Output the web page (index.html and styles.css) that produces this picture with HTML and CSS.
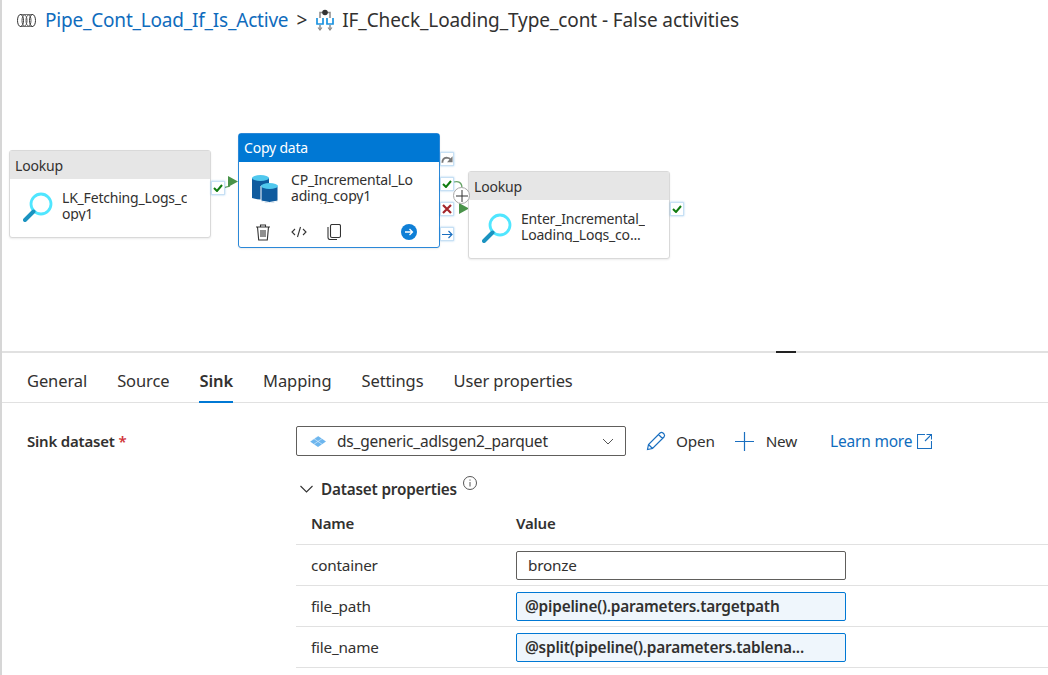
FILE: index.html
```html
<!DOCTYPE html>
<html lang="en">
<head>
  <meta charset="UTF-8">
  <title>IF_Check_Loading_Type_cont - False activities</title>
  <link rel="stylesheet" href="styles.css">
</head>
<body>
<div class="page">
  <div class="crumbs">
    <svg class="pipe-icon" width="19" height="13" viewBox="0 0 19 13" fill="none" stroke="#333" stroke-width="1">
      <path d="M3 .5h13M3 12.500h13" stroke="#777"/>
      <ellipse cx="3.500" cy="6.500" rx="3" ry="6"/>
      <ellipse cx="7.500" cy="6.500" rx="2.500" ry="5.500" stroke="#555"/>
      <ellipse cx="11.500" cy="6.500" rx="2.500" ry="5.500" stroke="#555"/>
      <ellipse cx="15.500" cy="6.500" rx="3" ry="6"/>
    </svg>
    <a class="crumb-link">Pipe_Cont_Load_If_Is_Active</a>
    <span class="crumb-sep">&gt;</span>
    <svg class="if-icon" width="18" height="22" viewBox="0 0 18 22" fill="none">
      <path d="M4 9V3.500h10V9M4 16v5M14 16v5" stroke="#8a8a8a" stroke-width="1.500"/>
      <circle cx="9" cy="3.500" r="2.800" fill="#333"/>
      <path d="M1 9v6h6V9M11 9v6h6V9" stroke="#1b93e0" stroke-width="1.700"/>
      <path d="M2 18.500l2 2.500 2-2.500M12 18.500l2 2.500 2-2.500" stroke="#8a8a8a" stroke-width="1.100"/>
    </svg>
    <span class="crumb-current">IF_Check_Loading_Type_cont - False activities</span>
  </div>

  <div class="canvas">
    <!-- links between activities -->
    <svg class="links" width="1048" height="311" viewBox="0 0 1048 311" fill="none">
      <path d="M224 148c3-2 4-1 6-2" stroke="#6aa56a" stroke-width="1.200"/>
      <path d="M228 136l10 5.500-10 5.500z" fill="#4a934a"/>
      <path d="M454 142c4-1 8 0 8 6" stroke="#6aa56a" stroke-width="1.200"/>
      <path d="M459 163l10 5.500-10 5.500z" fill="#4a934a"/>
    </svg>

    <div class="node node-a">
      <div class="node-head">Lookup</div>
      <div class="node-body">
        <svg class="lookup-icon" width="30" height="30" viewBox="0 0 30 30" fill="none">
          <circle cx="18" cy="12" r="10" stroke="#50e6ff" stroke-width="2.800"/>
          <path d="M10.500 19.500L2 28" stroke="#1b93c0" stroke-width="4" stroke-linecap="round"/>
        </svg>
        <div class="node-name">LK_Fetching_Logs_c<br>opy1</div>
      </div>
    </div>
    <div class="port port-a"><svg width="10" height="8" viewBox="0 0 10 8"><path class="tick" d="M1 4l3 3 5-6"/></svg></div>

    <div class="node node-b">
      <div class="node-head">Copy data</div>
      <div class="node-body">
        <svg class="copy-icon" width="26" height="30" viewBox="0 0 26 30">
          <path d="M0 4h17v20q-8.500 3-17 0z" fill="#0f5b9e"/>
          <ellipse cx="8.500" cy="4" rx="8.500" ry="3" fill="#50c8ee"/>
          <path d="M9 12h17v15q-8.500 3-17 0z" fill="#0f5b9e" stroke="#fff" stroke-width="1"/>
          <ellipse cx="17.500" cy="12" rx="8.500" ry="3" fill="#50c8ee"/>
        </svg>
        <div class="node-name">CP_Incremental_Lo<br>ading_copy1</div>
      </div>
      <div class="node-tools">
        <svg width="16" height="17" viewBox="0 0 16 17" fill="none" stroke="#333" stroke-width="1.100">
          <path d="M1 3h14M5.500 3V1h5v2M2.500 3l1.200 13h8.600L13.500 3M6 6v7M8 6v7M10 6v7"/>
        </svg>
        <svg width="16" height="12" viewBox="0 0 16 12" fill="none" stroke="#333" stroke-width="1.100">
          <path d="M4 3L1 6l3 3M12 3l3 3-3 3M9.500 1l-3 10"/>
        </svg>
        <svg width="14" height="16" viewBox="0 0 14 16" fill="none" stroke="#333" stroke-width="1.100">
          <rect x="3.500" y="0.500" width="10" height="13" rx="1.500"/>
          <path d="M1 3v10.500q0 2 2 2h7"/>
        </svg>
        <svg class="go-icon" width="16" height="16" viewBox="0 0 16 16" fill="none">
          <circle cx="8" cy="8" r="8" fill="#0f7fd6"/>
          <path d="M4 8h7.500M8.500 5l3 3-3 3" stroke="#fff" stroke-width="1.300"/>
        </svg>
      </div>
    </div>
    <div class="port port-skip"><svg width="13" height="9" viewBox="0 0 13 9" fill="none"><path d="M1.500 8q0-5 4.500-5.500 3 0 5 2.500" stroke="#7a7a7a" stroke-width="2"/><path d="M12.500 1v6.500H6.500z" fill="#7a7a7a"/></svg></div>
    <div class="port port-ok"><svg width="10" height="8" viewBox="0 0 10 8"><path class="tick" d="M1 4l3 3 5-6"/></svg></div>
    <div class="port port-fail"><svg width="10" height="10" viewBox="0 0 10 10"><path d="M1 1l8 8M9 1l-8 8" stroke="#a4262c" stroke-width="2.200"/></svg></div>
    <div class="port port-done"><svg width="11" height="9" viewBox="0 0 11 9" fill="none" stroke="#1a6fc0" stroke-width="1.200"><path d="M0 4.500h10M6.500 1L10 4.500 6.500 8"/></svg></div>

    <div class="node node-c">
      <div class="node-head">Lookup</div>
      <div class="node-body">
        <svg class="lookup-icon" width="30" height="30" viewBox="0 0 30 30" fill="none">
          <circle cx="18" cy="12" r="10" stroke="#50e6ff" stroke-width="2.800"/>
          <path d="M10.500 19.500L2 28" stroke="#1b93c0" stroke-width="4" stroke-linecap="round"/>
        </svg>
        <div class="node-name">Enter_Incremental_<br>Loading_Logs_co...</div>
      </div>
    </div>
    <div class="port port-c"><svg width="10" height="8" viewBox="0 0 10 8"><path class="tick" d="M1 4l3 3 5-6"/></svg></div>

    <div class="add-link">
      <svg width="12" height="12" viewBox="0 0 12 12" fill="none" stroke="#333" stroke-width="1"><path d="M6 0v12M0 6h12"/></svg>
    </div>
  </div>

  <div class="panel">
    <div class="grip"></div>
    <div class="tabs">
      <span class="tab">General</span>
      <span class="tab">Source</span>
      <span class="tab active">Sink</span>
      <span class="tab">Mapping</span>
      <span class="tab">Settings</span>
      <span class="tab">User properties</span>
    </div>

    <div class="form">
      <div class="sink-row">
        <label class="sink-label">Sink dataset <span class="req">*</span></label>
        <div class="select">
          <svg class="ds-icon" width="16" height="11" viewBox="0 0 16 11"><path d="M8 0l8 5.500L8 11 0 5.500z" fill="#6db6ee"/><path d="M4 2.700l8 5.500M8 0L0 5.500M12 2.700L4 8.200" stroke="#fff" stroke-width="0.500"/></svg>
          <span class="select-text">ds_generic_adlsgen2_parquet</span>
          <svg class="chev" width="12" height="7" viewBox="0 0 12 7" fill="none" stroke="#555" stroke-width="1"><path d="M1 1l5 5 5-5"/></svg>
        </div>
        <div class="action act-open">
          <svg width="20" height="20" viewBox="0 0 20 20" fill="none" stroke="#1a6fc0" stroke-width="1.200"><path d="M1.500 18.500l1-5L14 2q1.500-1.200 3 0l1 1q1.200 1.500 0 3L6.500 17.500zM2.500 13.500l4 4M12.500 3.500l4 4"/></svg>
          <span>Open</span>
        </div>
        <div class="action act-new">
          <svg width="19" height="19" viewBox="0 0 19 19" fill="none" stroke="#1a6fc0" stroke-width="1.200"><path d="M9.500 0v19M0 9.500h19"/></svg>
          <span>New</span>
        </div>
        <a class="learn">Learn more
          <svg width="15" height="15" viewBox="0 0 15 15" fill="none" stroke="#1a6fc0" stroke-width="1.100"><path d="M8 .5H.5v14h14V7M9.500.5h5v5M14.500.5L8 7"/></svg>
        </a>
      </div>

      <div class="props-head">
        <svg width="13" height="8" viewBox="0 0 13 8" fill="none" stroke="#333" stroke-width="1.100"><path d="M.5 1l6 6 6-6"/></svg>
        <span class="props-title">Dataset properties</span>
        <svg class="info" width="14" height="14" viewBox="0 0 14 14" fill="none" stroke="#444" stroke-width="0.900"><circle cx="7" cy="7" r="6.500"/><path d="M7 6v4.500M7 3.500v1.200"/></svg>
      </div>

      <div class="props">
        <div class="row row-head"><span class="col-name">Name</span><span class="col-value">Value</span></div>
        <div class="row"><span class="col-name">container</span><div class="field">bronze</div></div>
        <div class="row"><span class="col-name">file_path</span><div class="field expr">@pipeline().parameters.targetpath</div></div>
        <div class="row"><span class="col-name">file_name</span><div class="field expr">@split(pipeline().parameters.tablena...</div></div>
      </div>
    </div>
  </div>
</div>
</body>
</html>
```

FILE: styles.css
```css
* { box-sizing: border-box; }
body {
  margin: 0;
  background: #fff;
  color: #323130;
  font-family: "Noto Sans", "Open Sans", sans-serif;
  font-size: 14px;
}
.page {
  width: 1048px;
  height: 675px;
  overflow: hidden;
  border-left: 2px solid #d6d6d6;
  display: flex;
  flex-direction: column;
}

/* breadcrumb */
.crumbs {
  height: 40px;
  flex: none;
  display: flex;
  align-items: center;
  padding-left: 15px;
  font-size: 19px;
}
.pipe-icon { margin-right: 9px; }
.crumb-link { color: #0f6cbd; letter-spacing: -0.200px; }
.crumb-sep { margin: 0 9px 0 8px; }
.if-icon { margin-right: 8px; }
.crumb-current { letter-spacing: -0.100px; }

/* pipeline canvas, nodes sit at free positions */
.canvas {
  height: 311px;
  flex: none;
  position: relative;
}
.links { position: absolute; left: -2px; top: 0; }
.node {
  position: absolute;
  width: 202px;
  height: 88px;
  background: #fff;
  border: 1px solid #d9d9d9;
  border-radius: 3px;
  box-shadow: 0 1px 2px rgba(0,0,0,0.08);
}
.node-a { left: 7px; top: 110px; }
.node-b { left: 236px; top: 93px; height: 115px; border-color: #2b88d8; }
.node-c { left: 466px; top: 131px; }
.node-head {
  height: 28px;
  line-height: 30px;
  padding-left: 5px;
  background: #e6e6e6;
  font-size: 14px;
  letter-spacing: -0.200px;
}
.node-b .node-head { background: #0078d4; color: #fff; line-height: 28px; }
.node-body {
  display: flex;
  align-items: flex-start;
  padding: 11px 0 0 13px;
}
.node-name {
  margin-left: 9px;
  font-size: 14px;
  line-height: 16px;
  letter-spacing: -0.200px;
  height: 31px;
  overflow: hidden;
}
.node-b .node-name { margin-top: -1px; height: 32px; }
.lookup-icon { margin-top: 2px; }
.copy-icon { margin-top: 1px; margin-right: 4px; }
.node-tools {
  display: flex;
  align-items: center;
  margin-top: 19px;
  padding-left: 16px;
  height: 18px;
}
.node-tools svg { margin-right: 20px; }
.node-tools .go-icon { margin: 0 0 0 40px; }
.port {
  position: absolute;
  width: 14px;
  height: 14px;
  background: #fff;
  border: 1px solid #c7e0f4;
  box-shadow: 0 0 2px rgba(0,120,212,0.35);
  display: flex;
  align-items: center;
  justify-content: center;
}
.tick { fill: none; stroke: #107c10; stroke-width: 2; }
.port-a { left: 209px; top: 141px; }
.port-skip { left: 438px; top: 112px; }
.port-ok { left: 438px; top: 137px; }
.port-fail { left: 438px; top: 162px; }
.port-done { left: 438px; top: 187px; }
.port-c { left: 668px; top: 162px; }
.add-link {
  position: absolute;
  left: 451px;
  top: 147px;
  width: 17px;
  height: 17px;
  border-radius: 50%;
  border: 1px solid #a8a8a8;
  background: #fff;
  display: flex;
  align-items: center;
  justify-content: center;
}

/* lower panel */
.panel {
  flex: 1;
  position: relative;
  border-top: 2px solid #e1e1e1;
}
.grip {
  position: absolute;
  left: 774px;
  top: -2px;
  width: 20px;
  height: 2px;
  background: #222;
}
.tabs {
  display: flex;
  height: 50px;
  padding-left: 25px;
  gap: 30px;
  border-bottom: 1px solid #e1e1e1;
  font-size: 16.500px;
}
.tab {
  height: 50px;
  line-height: 56px;
  letter-spacing: -0.100px;
}
.tab.active {
  font-weight: 600;
  border-bottom: 2px solid #0078d4;
}
.form { position: relative; }
.sink-row {
  display: flex;
  align-items: center;
  height: 30px;
  margin-top: 23px;
  padding-left: 25px;
}
.sink-label {
  width: 269px;
  flex: none;
  font-weight: 600;
  font-size: 15px;
  letter-spacing: -0.200px;
}
.req { color: #d13438; }
.select {
  width: 330px;
  height: 30px;
  flex: none;
  border: 1px solid #605e5c;
  border-radius: 2px;
  display: flex;
  align-items: center;
  padding-left: 13px;
  font-size: 15.500px;
}
.select-text { margin-left: 11px; flex: 1; letter-spacing: -0.200px; }
.chev { margin-right: 11px; }
.action {
  display: flex;
  align-items: center;
  font-size: 15.300px;
  letter-spacing: -0.200px;
}
.act-open { margin-left: 20px; }
.act-open span { margin-left: 10px; }
.act-new { margin-left: 20px; }
.act-new span { margin-left: 12px; }
.learn {
  display: flex;
  align-items: center;
  gap: 5px;
  margin-left: 33px;
  color: #0f6cbd;
  font-size: 15.500px;
  letter-spacing: -0.200px;
}
.props-head {
  display: flex;
  align-items: center;
  height: 22px;
  margin: 22px 0 0 298px;
  position: relative;
}
.props-title {
  margin-left: 8px;
  font-weight: 600;
  font-size: 15.300px;
  letter-spacing: -0.200px;
}
.info { margin: -12px 0 0 6px; }
.props { margin: 4px 0 0 294px; }
.row {
  display: flex;
  align-items: center;
  height: 41px;
  border-bottom: 1px solid #e1e1e1;
  padding-left: 15px;
  font-size: 15.300px;
  letter-spacing: -0.200px;
}
.row-head { font-weight: 600; font-size: 15px; padding-bottom: 2px; }
.col-name { width: 205px; flex: none; }
.field {
  width: 330px;
  height: 29px;
  line-height: 27px;
  border: 1px solid #605e5c;
  border-radius: 2px;
  padding-left: 11px;
  font-size: 15.300px;
}
.field.expr {
  background: #eff6fc;
  border-color: #0078d4;
  padding-left: 8px;
  font-weight: 600;
  font-size: 15.400px;
}
```
